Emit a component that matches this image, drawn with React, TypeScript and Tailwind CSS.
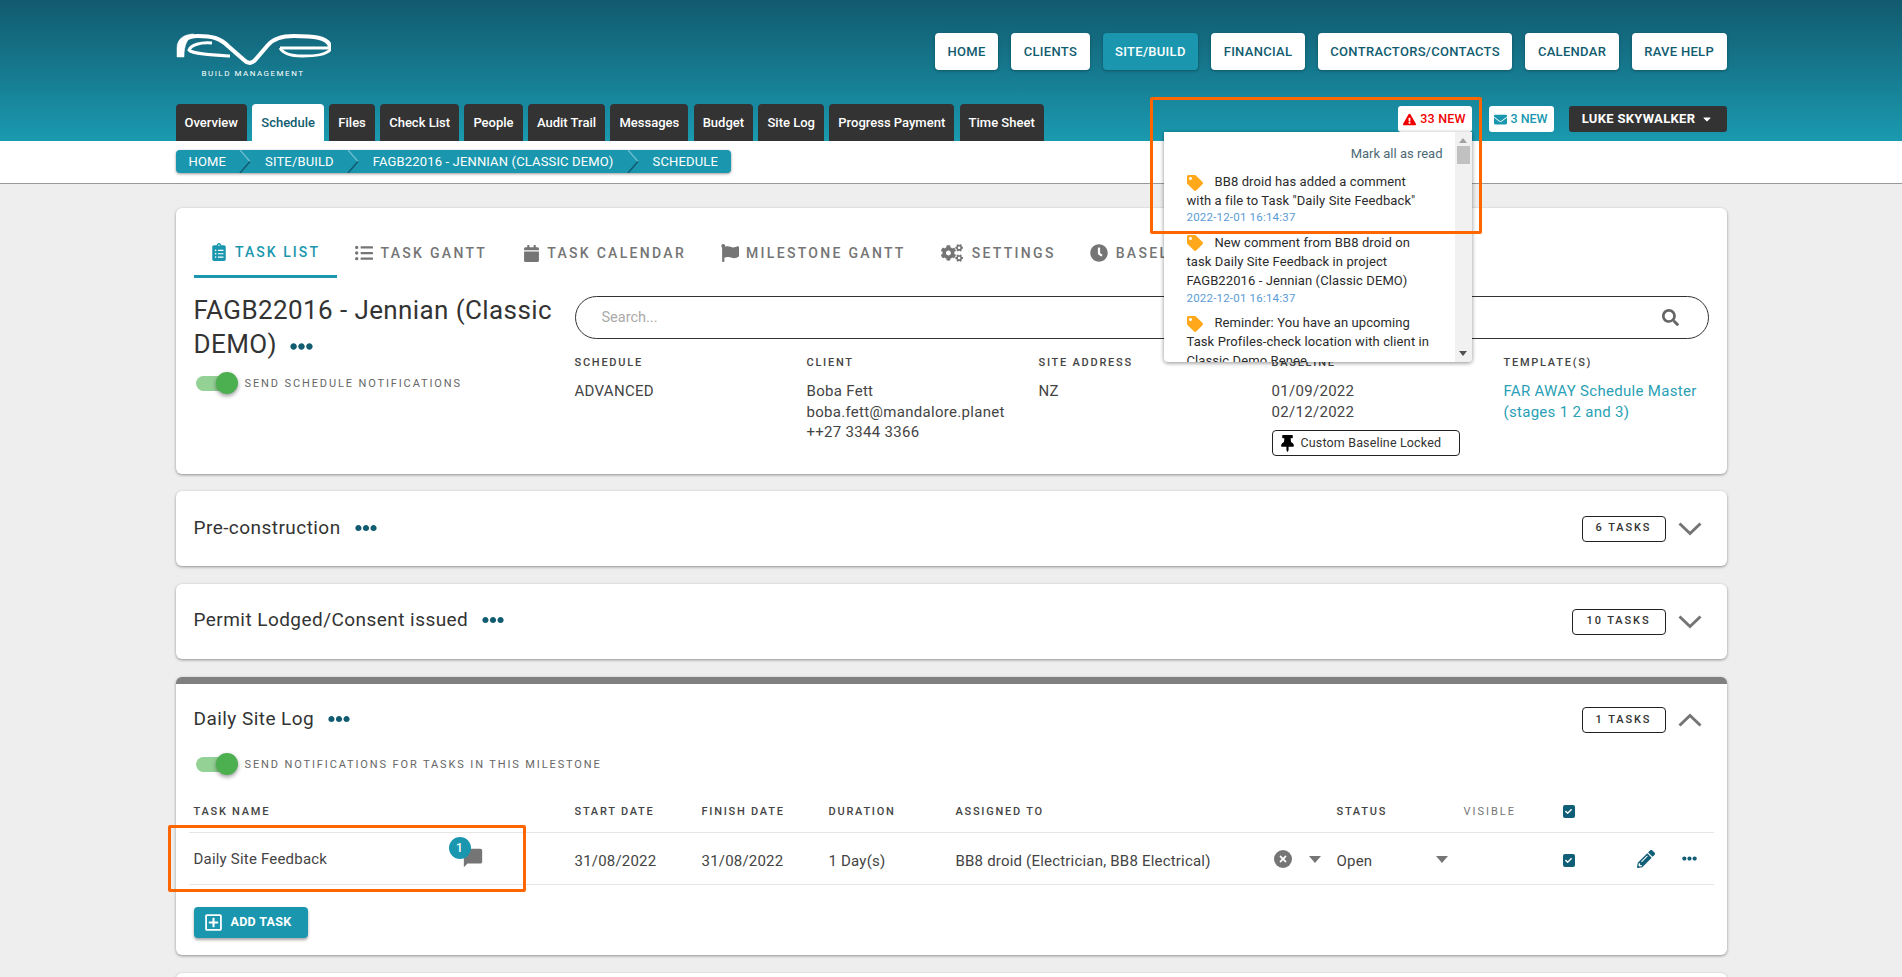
import {
  FaCalendar,
  FaCaretDown,
  FaCheck,
  FaClipboardList,
  FaClock,
  FaCogs,
  FaEllipsisH,
  FaEnvelope,
  FaExclamationTriangle,
  FaFlag,
  FaListUl,
  FaPencilAlt,
  FaRegPlusSquare,
  FaSearch,
  FaTag,
  FaThumbtack,
  FaTimes,
} from "react-icons/fa";
import { MdChatBubble } from "react-icons/md";

const NAV = ["HOME", "CLIENTS", "SITE/BUILD", "FINANCIAL", "CONTRACTORS/CONTACTS", "CALENDAR", "RAVE HELP"];
const TABS = ["Overview", "Schedule", "Files", "Check List", "People", "Audit Trail", "Messages", "Budget", "Site Log", "Progress Payment", "Time Sheet"];
const CRUMBS = ["HOME", "SITE/BUILD", "FAGB22016 - JENNIAN (CLASSIC DEMO)", "SCHEDULE"];

const NOTES = [
  { text: 'BB8 droid has added a comment with a file to Task "Daily Site Feedback"', date: "2022-12-01 16:14:37" },
  { text: "New comment from BB8 droid on task Daily Site Feedback in project FAGB22016 - Jennian (Classic DEMO)", date: "2022-12-01 16:14:37" },
  { text: "Reminder: You have an upcoming Task Profiles-check location with client in Classic Demo Renee", date: "2022-12-01 16:14:37" },
];

function Logo() {
  return (
    <div className="flex w-[155px] flex-col items-center">
      <svg width="155" height="34" viewBox="0 0 155 34" fill="none" stroke="white">
        <path d="M1 24 L1 15 C1 6 8 1 18 1 C12 5 8 11 8 24 Z" fill="white" strokeWidth="0.5" />
        <path d="M4 20 C3 8 11 3 22 3 C36 3 44 5 52 13 L68 27 C72 31 76 31 80 26 L92 12 C98 5 106 3 118 3 C136 3 153 4 154 14" strokeWidth="4.2" />
        <path d="M36 10 C24 9 15 12 13 17 C16 21 36 22 54 23" strokeWidth="3" />
        <path d="M104 15 H155" strokeWidth="3.2" />
        <path d="M104 15 C108 22 118 23 126 23 C140 23 150 22 155 16" strokeWidth="2.8" />
      </svg>
      <span className="mt-[2px] text-[8px] leading-[10px] tracking-[1.5px] text-white">BUILD MANAGEMENT</span>
    </div>
  );
}

function Dots({ className }: { className: string }) {
  return <FaEllipsisH className={`text-[#115c70] ${className}`} />;
}

function Toggle({ label }: { label: string }) {
  return (
    <div className="flex items-center">
      <div className="relative ml-[2px] h-[15px] w-[42px]">
        <div className="h-[15px] w-[36px] rounded-full bg-[#93d195]" />
        <div className="absolute top-[-4px] right-0 h-[22px] w-[22px] rounded-full bg-[#4caf50] shadow-[0_2px_4px_rgba(0,0,0,0.4)]" />
      </div>
      <span className="ml-[7px] text-[11px] leading-[15px] tracking-[1.88px] text-[#666]">{label}</span>
    </div>
  );
}

function Check() {
  return (
    <div className="flex h-[13px] w-[12px] items-center justify-center rounded-[2px] bg-[#115f76]">
      <FaCheck className="text-[7px] text-white" />
    </div>
  );
}

function TaskBadge({ count, width }: { count: string; width: string }) {
  return (
    <div className={`flex h-[26px] items-center justify-center rounded-[4px] border border-[#222] text-[11px] font-medium tracking-[1.9px] text-[#333] ${width}`}>
      {count}
    </div>
  );
}

function Chevron({ up }: { up?: boolean }) {
  return (
    <svg width="24" height="14" viewBox="0 0 24 14" fill="none" stroke="#757575" strokeWidth="3" className="ml-[12px]">
      <path d={up ? "M1.5 12.5 L12 2.5 L22.5 12.5" : "M1.5 1.5 L12 11.5 L22.5 1.5"} />
    </svg>
  );
}

function Milestone({ title, count, width, lift }: { title: string; count: string; width: string; lift: string }) {
  return (
    <section className="flex h-[75px] items-center justify-between rounded-[6px] bg-white pr-[25px] pl-[18px] shadow-[0_1px_3px_rgba(0,0,0,0.4)]">
      <div className={`flex items-center ${lift}`}>
        <h3 className="text-[19px] leading-[24px] tracking-[0.45px] text-[#333]">{title}</h3>
        <Dots className="ml-[14px] text-[22px]" />
      </div>
      <div className="flex items-center">
        <TaskBadge count={count} width={width} />
        <Chevron />
      </div>
    </section>
  );
}

function InfoColumn({ label, children }: { label: string; children: React.ReactNode }) {
  return (
    <div>
      <div className="text-[11px] leading-[14px] font-medium tracking-[1.75px] text-[#444]">{label}</div>
      <div className="mt-[11px] text-[15px] leading-[20.5px] tracking-[0.3px] text-[#444]">{children}</div>
    </div>
  );
}

function Notifications() {
  return (
    <div className="absolute top-[26px] right-0 z-20 flex h-[230px] w-[308px] overflow-hidden rounded-b-[4px] bg-white shadow-[0_1px_4px_rgba(0,0,0,0.45)]">
      <div className="flex-1 overflow-hidden pt-[13px] pr-[11px] pl-[23px]">
        <div className="pr-[1px] text-right text-[13px] leading-[17px] font-normal tracking-[0] text-[#4d6a75]">Mark all as read</div>
        <div className="mt-[10px] flex flex-col gap-[7.5px] pr-[11px]">
          {NOTES.map((note, i) => (
            <div key={i}>
              <p className="text-[13px] leading-[19.2px] font-normal tracking-[0.1px] text-[#2b2b2b]">
                <FaTag className="mr-[12px] inline-block align-middle text-[16px] text-[#ffa81c]" />
                {note.text}
              </p>
              <div className="-mt-[1px] text-[11.5px] leading-[16px] font-normal text-[#5b9bd5]">{note.date}</div>
            </div>
          ))}
        </div>
      </div>
      <div className="flex w-[17px] flex-col items-center justify-between bg-[#f1f1f1] py-[6px]">
        <div className="h-0 w-0 border-x-[4px] border-b-[5px] border-x-transparent border-b-[#a3a3a3]" />
        <div className="mt-[3px] h-[18px] w-[13px] bg-[#c1c1c1]" />
        <div className="flex-1" />
        <div className="h-0 w-0 border-x-[4px] border-t-[5px] border-x-transparent border-t-[#505050]" />
      </div>
    </div>
  );
}

export default function App() {
  return (
    <div className="relative h-[977px] overflow-hidden bg-[#eeeeee] font-['Roboto',sans-serif]">
      <header className="h-[141px] bg-gradient-to-b from-[#115a6e] to-[#1a9ab0]">
        <div className="mx-auto w-[1551px] pt-[33px]">
          <div className="flex h-[71px] items-start justify-between">
            <Logo />
            <nav className="flex gap-[13px]">
              {NAV.map((item) => (
                <a
                  key={item}
                  className={`flex h-[37px] items-center rounded-[4px] px-[12.5px] text-[13px] font-medium tracking-[0.3px] shadow-[0_1px_3px_rgba(0,0,0,0.3)] ${
                    item === "SITE/BUILD" ? "bg-[#1a97ae] text-white" : "bg-white text-[#115c70]"
                  }`}
                >
                  {item}
                </a>
              ))}
            </nav>
          </div>
          <div className="flex items-start justify-between">
            <div className="flex gap-[5.4px]">
              {TABS.map((tab) => (
                <a
                  key={tab}
                  className={`flex h-[37px] items-center rounded-t-[4px] px-[9px] text-[13px] font-medium ${
                    tab === "Schedule" ? "bg-white text-[#115c70]" : "bg-[#333333] text-white"
                  }`}
                >
                  {tab}
                </a>
              ))}
            </div>
            <div className="mt-[2px] flex items-center">
              <div className="relative flex h-[26px] w-[74px] items-center justify-center gap-[4px] rounded-[3px] bg-white text-[12.5px] font-medium tracking-[0.2px] text-[#f00000]">
                <FaExclamationTriangle className="text-[13px]" />
                33 NEW
                <Notifications />
              </div>
              <div className="ml-[17px] flex h-[26px] w-[65px] items-center justify-center gap-[3px] rounded-[3px] bg-white text-[12.5px] font-medium text-[#1a97ae]">
                <FaEnvelope className="text-[13px]" />
                3 NEW
              </div>
              <div className="ml-[15px] flex h-[26px] w-[158px] items-center justify-center gap-[6px] rounded-[3px] bg-[#333333] text-[13px] font-bold tracking-[0.3px] text-white">
                LUKE SKYWALKER
                <FaCaretDown className="text-[12px]" />
              </div>
            </div>
          </div>
        </div>
      </header>

      <div className="h-[43px] border-b border-[#999] bg-white">
        <div className="mx-auto w-[1551px] pt-[9px]">
          <div className="flex h-[23px] w-fit items-center rounded-[4px] bg-[#1a97ae] px-[13px] text-[13px] tracking-[0.15px] text-white shadow-[0_1px_3px_rgba(0,0,0,0.4)]">
            {CRUMBS.map((crumb, i) => (
              <div key={crumb} className="flex items-center">
                {i > 0 && (
                  <svg width="13" height="23" viewBox="0 0 13 23" fill="none" className="mx-[13px]">
                    <path d="M1 0 L11 11.5" stroke="#6fc0d0" strokeWidth="1.2" />
                    <path d="M11 11.5 L1 23" stroke="#115a6e" strokeWidth="1.4" />
                  </svg>
                )}
                <span>{crumb}</span>
              </div>
            ))}
          </div>
        </div>
      </div>

      <main className="mx-auto flex w-[1551px] flex-col gap-[18px] pt-[24px]">
        <section className="h-[266px] rounded-[6px] bg-white shadow-[0_1px_3px_rgba(0,0,0,0.4)]">
          <div className="flex h-[70px] pl-[18px] text-[14px] font-medium tracking-[2.3px] text-[#757575]">
            <div className="flex w-[143px] items-center justify-center gap-[7px] border-b-[3px] border-[#1a97ae] pt-[21px] tracking-[2.05px] text-[#1a97ae]">
              <FaClipboardList className="text-[18px]" />
              TASK LIST
            </div>
            <div className="ml-[18px] flex items-center gap-[8px] pt-[20px]">
              <FaListUl className="text-[18px]" />
              TASK GANTT
            </div>
            <div className="ml-[36px] flex items-center gap-[7px] pt-[20px]">
              <FaCalendar className="text-[17px]" />
              TASK CALENDAR
            </div>
            <div className="ml-[35px] flex items-center gap-[7px] pt-[20px]">
              <FaFlag className="text-[18px]" />
              MILESTONE GANTT
            </div>
            <div className="ml-[35px] flex items-center gap-[9px] pt-[20px]">
              <FaCogs className="text-[22px]" />
              SETTINGS
            </div>
            <div className="ml-[34px] flex items-center gap-[8px] pt-[20px]">
              <FaClock className="text-[18px]" />
              BASELINE
            </div>
          </div>

          <div className="flex px-[18px]">
            <div className="w-[381px] shrink-0 pt-[15px]">
              <h1 className="w-[375px] text-[26px] leading-[34px] tracking-[0.4px] text-[#333]">
                FAGB22016 - Jennian (Classic DEMO)
                <Dots className="ml-[13px] inline-block text-[23px]" />
              </h1>
              <div className="mt-[15px]">
                <Toggle label="SEND SCHEDULE NOTIFICATIONS" />
              </div>
            </div>
            <div className="flex-1 pt-[18px]">
              <div className="flex h-[43px] items-center justify-between rounded-full border border-[#333] pr-[29px] pl-[26px]">
                <span className="text-[14.5px] text-[#aaa]">Search...</span>
                <FaSearch className="text-[17px] text-[#666]" />
              </div>
              <div className="mt-[17px] grid grid-cols-[232px_232px_233px_232px_1fr]">
                <InfoColumn label="SCHEDULE">ADVANCED</InfoColumn>
                <InfoColumn label="CLIENT">
                  <div>Boba Fett</div>
                  <div>boba.fett@mandalore.planet</div>
                  <div>++27 3344 3366</div>
                </InfoColumn>
                <InfoColumn label="SITE ADDRESS">NZ</InfoColumn>
                <InfoColumn label="BASELINE">
                  <div>01/09/2022</div>
                  <div>02/12/2022</div>
                  <div className="mt-[8px] flex h-[26px] w-[188px] items-center gap-[5px] rounded-[4px] border border-[#222] pl-[6px] text-[12.5px] tracking-[0.15px] text-[#333]">
                    <FaThumbtack className="text-[17px] text-black" />
                    Custom Baseline Locked
                  </div>
                </InfoColumn>
                <InfoColumn label="TEMPLATE(S)">
                  <span className="text-[#2a9fb5]">FAR AWAY Schedule Master (stages 1 2 and 3)</span>
                </InfoColumn>
              </div>
            </div>
          </div>
        </section>

        <div className="-mt-[1px]">
          <Milestone title="Pre-construction" count="6 TASKS" width="w-[84px]" lift="-mt-[2px]" />
        </div>
        <Milestone title="Permit Lodged/Consent issued" count="10 TASKS" width="w-[94px]" lift="-mt-[4px]" />

        <section className="h-[278px] overflow-hidden rounded-[6px] border-t-[7px] border-[#808080] bg-white shadow-[0_1px_3px_rgba(0,0,0,0.4)]">
          <div className="flex items-start justify-between pt-[23px] pr-[25px] pl-[18px]">
            <div className="flex items-center">
              <h3 className="text-[19px] leading-[24px] tracking-[0.45px] text-[#333]">Daily Site Log</h3>
              <Dots className="ml-[14px] text-[22px]" />
            </div>
            <div className="flex items-center">
              <TaskBadge count="1 TASKS" width="w-[84px]" />
              <Chevron up />
            </div>
          </div>
          <div className="mt-[24px] pl-[18px]">
            <Toggle label="SEND NOTIFICATIONS FOR TASKS IN THIS MILESTONE" />
          </div>

          <div className="mx-[13px] mt-[33px]">
            <div className="grid h-[27px] grid-cols-[381px_127px_127px_127px_381px_127px_99px_1fr] items-start pl-[5px] text-[11px] leading-[14px] font-medium tracking-[1.75px] text-[#444]">
              <div>TASK NAME</div>
              <div>START DATE</div>
              <div>FINISH DATE</div>
              <div>DURATION</div>
              <div>ASSIGNED TO</div>
              <div>STATUS</div>
              <div className="font-normal tracking-[2px] text-[#757575]">VISIBLE</div>
              <Check />
            </div>
            <div className="grid h-[53px] grid-cols-[381px_127px_127px_127px_381px_127px_99px_1fr] items-center border-y border-[#e5e5e5] pl-[5px] text-[15px] tracking-[0.2px] text-[#444]">
              <div className="relative flex items-center pt-[1px]">
                Daily Site Feedback
                <MdChatBubble className="absolute top-0 left-[268px] text-[22px] text-[#757575]" />
                <span className="absolute top-[-10px] left-[255px] flex h-[22px] w-[22px] items-center justify-center rounded-full bg-[#1a97ae] text-[12px] font-medium text-white">1</span>
              </div>
              <div className="mt-[6px]">31/08/2022</div>
              <div className="mt-[6px]">31/08/2022</div>
              <div className="mt-[6px]">1 Day(s)</div>
              <div className="flex items-center pr-[16px]">
                <span className="mt-[6px] flex-1">BB8 droid (Electrician, BB8 Electrical)</span>
                <span className="flex h-[18px] w-[18px] items-center justify-center rounded-full bg-[#757575]">
                  <FaTimes className="text-[10px] text-white" />
                </span>
                <svg width="12" height="8" viewBox="0 0 12 8" className="mt-[2px] ml-[17px]">
                  <path d="M0 0 H12 L6 7 Z" fill="#757575" />
                </svg>
              </div>
              <div className="flex items-center justify-between pr-[16px]">
                <span className="mt-[6px]">Open</span>
                <svg width="12" height="8" viewBox="0 0 12 8" className="mt-[2px]">
                  <path d="M0 0 H12 L6 7 Z" fill="#757575" />
                </svg>
              </div>
              <div />
              <div className="flex items-center">
                <div className="mt-[3px]">
                  <Check />
                </div>
                <FaPencilAlt className="ml-[62px] text-[18px] text-[#115f76]" />
                <FaEllipsisH className="ml-[27px] text-[15px] text-[#115f76]" />
              </div>
            </div>
          </div>

          <div className="mt-[22px] ml-[18px] flex h-[31px] w-[114px] items-center gap-[8px] rounded-[4px] bg-[#1a97ae] pl-[10px] text-[12.5px] font-bold tracking-[0.3px] text-white shadow-[0_2px_3px_rgba(0,0,0,0.35)]">
            <FaRegPlusSquare className="text-[19px]" />
            ADD TASK
          </div>
        </section>

        <section className="h-[40px] rounded-[6px] bg-white shadow-[0_1px_3px_rgba(0,0,0,0.4)]" />
      </main>

      {/* orange callouts drawn over the screenshot */}
      <div className="absolute top-[97px] left-[1150px] z-30 h-[137px] w-[332px] rounded-[2px] border-[3px] border-[#ff6600]" />
      <div className="absolute top-[825px] left-[168px] z-30 h-[67px] w-[358px] rounded-[2px] border-[3px] border-[#ff6600]" />
    </div>
  );
}
